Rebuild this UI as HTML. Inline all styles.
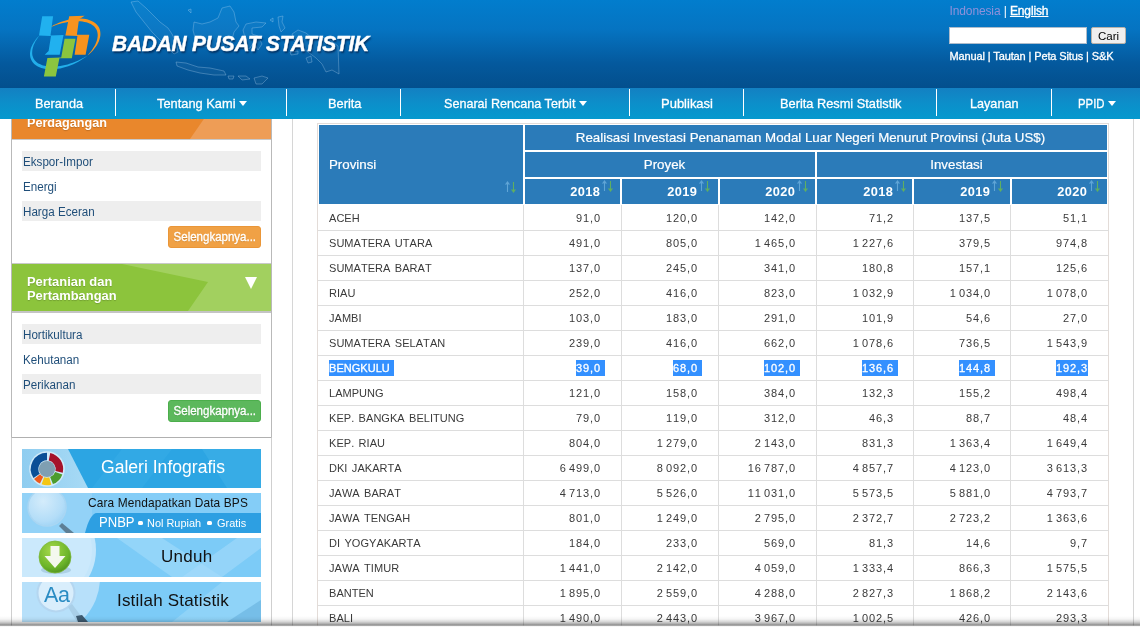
<!DOCTYPE html>
<html lang="id">
<head>
<meta charset="utf-8">
<title>Badan Pusat Statistik</title>
<style>
*{box-sizing:border-box;margin:0;padding:0}
html,body{width:1140px;height:627px;overflow:hidden;background:#fff;font-family:"Liberation Sans",sans-serif}
#page{position:relative;width:1140px;height:627px;overflow:hidden;background:#fff;will-change:transform}
.abs{position:absolute}
/* header */
#hdr,#title,#lang,#sbox,#sbtn,#links,#nav{z-index:5}
#hdr{left:0;top:0;width:1140px;height:88px;background:linear-gradient(to bottom,#027dcd 0%,#0574c2 33%,#04599d 72%,#034f8d 100%)}
#title{left:111.5px;top:31.4px;-webkit-text-stroke:.45px #fff;font:italic bold 22.5px "Liberation Sans",sans-serif;color:#fff;white-space:nowrap;transform-origin:0 0;transform:scaleX(.928);text-shadow:1px 2px 2px rgba(0,30,70,.75);letter-spacing:-.2px}
#lang{left:949.5px;top:4px;font:12px "Liberation Sans",sans-serif;color:#fff;white-space:nowrap;letter-spacing:-.12px}
#lang .id{color:#8f91da}
#lang .en{text-decoration:underline;-webkit-text-stroke:.35px #fff}
#sbox{left:949px;top:27px;width:138px;height:17px;background:#fff;border:1px solid #aebccb}
#sbtn{left:1091px;top:27px;width:35px;height:17px;background:#efefef;border:1px solid #b9b2aa;border-radius:2px;font:11.5px "Liberation Sans",sans-serif;color:#000;text-align:center;line-height:16px}
#links{left:949.5px;top:50px;font:11px "Liberation Sans",sans-serif;color:#fff;white-space:nowrap;letter-spacing:-.12px;-webkit-text-stroke:.3px #fff}
/* nav */
#nav{left:0;top:88px;width:1140px;height:31px;background:linear-gradient(to bottom,#1380c2 0%,#0c8fca 50%,#0599ce 100%)}
.ni{top:0;height:31px;color:#fff;-webkit-text-stroke:.3px #fff;font:13.5px/31px "Liberation Sans",sans-serif;white-space:nowrap;transform-origin:0 50%}
.sep{top:1px;width:1px;height:27px;background:#fff}
.car{display:block;top:13px;width:0;height:0;border-left:4.5px solid transparent;border-right:4.5px solid transparent;border-top:5px solid #fff}

/* sidebar */
.box{border:1px solid #c3c3c3;background:#fff}
.sh{left:12px;width:259px;color:#fff;font:bold 13.5px/14px "Liberation Sans",sans-serif;overflow:hidden;text-shadow:0 1px 1px rgba(0,0,0,.18)}
.it{left:22px;width:239px;height:20px;font:12.5px/22px "Liberation Sans",sans-serif;color:#1f4e79;white-space:nowrap}
.it.g{background:#eeeeee}
.it span{display:inline-block;transform-origin:0 50%;transform:scaleX(.93);margin-left:.8px}
.btn{-webkit-text-stroke:.3px #fff;text-shadow:0 1px 1px rgba(0,0,0,.15);left:168px;width:93px;height:22px;border-radius:3px;color:#fff;font:12.5px/20px "Liberation Sans",sans-serif;text-align:center;white-space:nowrap}
.btn span{display:inline-block;transform:scaleX(.92)}
.bn{left:22px;width:239px;overflow:hidden}
.bn .t{position:absolute;white-space:nowrap;font-family:"Liberation Sans",sans-serif}

/* table */
.hc{background:#2b7bb9;color:#fff;font:13.3px "Liberation Sans",sans-serif;white-space:nowrap;-webkit-text-stroke:.2px #fff}
.hc .c{position:absolute;left:0;right:11px;text-align:center}
.yr{position:absolute;font:bold 12.8px "Liberation Sans",sans-serif;color:#fff;letter-spacing:.4px;margin-left:.4px}
.hl{height:1px;background:#dddddd;left:318px;width:791px}
.vl{width:1px;background:#dddddd;top:205px;height:422px}
.td{font:11px/15px "Liberation Sans",sans-serif;color:#3a3a3a;white-space:pre;letter-spacing:.9px;height:15px;font-kerning:none}
.td.p{left:329px;letter-spacing:.04px;word-spacing:1.3px}
.td.n{text-align:right}
.sel{background:#3390ff;color:#fff;padding:2px 0 1.5px;-webkit-text-stroke:.3px #fff}
.ts{letter-spacing:-.85px}
</style>
</head>
<body>
<div id="page">
  <div id="hdr" class="abs"></div>
  <svg class="abs" style="left:110px;top:0;z-index:5" width="280" height="88" viewBox="110 0 280 88" fill="rgba(255,255,255,.035)" stroke="rgba(190,220,245,.3)" stroke-width="1">
    <path d="M131,2 L138,1 L146,8 L152,14 L160,22 L168,28 L172,34 L176,42 L178,52 L174,54 L168,48 L160,40 L152,32 L144,22 L136,12 Z"/>
    <path d="M176,62 L186,63 L198,67 L210,68 L224,71 L226,75 L214,75 L200,73 L188,70 L177,66 Z"/>
    <path d="M194,22 L202,24 L210,22 L218,18 L222,8 L230,6 L234,12 L236,22 L239,26 L234,32 L232,40 L226,48 L216,50 L208,46 L200,46 L195,38 L193,30 Z"/>
    <path d="M246,24 L256,22 L266,23 L262,27 L252,28 L252,34 L258,36 L262,44 L258,50 L254,42 L250,48 L246,50 L245,38 L243,30 Z"/>
    <path d="M278,17 L283,16 L282,22 L285,28 L281,32 L279,26 Z"/>
    <path d="M292,34 L298,30 L306,33 L312,38 L320,36 L330,40 L338,46 L339,74 L332,70 L326,72 L322,64 L316,58 L308,52 L300,46 L294,40 Z"/>
    <path d="M238,76 L246,76 L250,79 L242,80 Z M254,78 L262,76 L268,78 L262,84 L256,84 Z M228,76 L234,76 L233,79 L229,79 Z"/>
    <path d="M270,20 L273,18 L273,22 Z M188,10 L191,9 L191,13 Z M306,58 L311,56 L312,62 L308,63 Z M290,52 L298,51 L298,54 L291,55 Z" />
  </svg>
  <svg class="abs" style="left:25px;top:10px;z-index:6" width="80" height="72" viewBox="25 10 80 72">
    <path d="M39.3,35.5 L37.6,37.3 L36.1,39.1 L34.7,41.0 L33.4,42.9 L32.4,44.8 L31.5,46.7 L30.8,48.6 L30.4,50.5 L30.1,52.3 L30.0,54.1 L30.1,55.8 L30.4,57.4 L30.9,59.0 L31.6,60.5 L32.5,61.9 L33.5,63.2 L34.8,64.4 L36.2,65.4 L37.8,66.4 L39.5,67.2 L41.4,67.9 L43.4,68.5 L45.6,68.9 L47.8,69.2 L50.2,69.3 L52.6,69.3 L55.1,69.1 L57.7,68.8 L60.3,68.4 L62.9,67.8 L65.5,67.1 L68.2,66.3 L70.8,65.3 L73.4,64.2 L75.9,63.0 L78.4,61.7 L80.8,60.3 L83.1,58.8 L85.4,57.2 L87.5,55.6 L87.5,55.6 L85.1,57.0 L82.7,58.3 L80.3,59.6 L77.8,60.7 L75.3,61.8 L72.8,62.8 L70.2,63.6 L67.7,64.4 L65.1,65.0 L62.6,65.6 L60.2,66.0 L57.8,66.3 L55.4,66.5 L53.1,66.6 L50.9,66.6 L48.8,66.4 L46.8,66.2 L44.8,65.8 L43.0,65.4 L41.3,64.8 L39.8,64.1 L38.3,63.4 L37.0,62.5 L35.9,61.5 L34.9,60.4 L34.0,59.2 L33.3,58.0 L32.8,56.6 L32.4,55.2 L32.2,53.7 L32.2,52.1 L32.3,50.4 L32.6,48.7 L33.1,46.9 L33.7,45.1 L34.6,43.2 L35.5,41.3 L36.7,39.4 L38.0,37.5 L39.3,35.5Z" fill="#22aeea"/>
    <path d="M49.1,27.8 L51.4,26.4 L53.8,25.1 L56.3,23.9 L58.8,22.8 L61.4,21.8 L64.0,21.0 L66.5,20.2 L69.1,19.6 L71.7,19.1 L74.2,18.8 L76.6,18.6 L79.1,18.5 L81.4,18.6 L83.6,18.8 L85.8,19.1 L87.8,19.6 L89.7,20.2 L91.5,20.9 L93.2,21.7 L94.7,22.7 L96.0,23.8 L97.2,25.0 L98.2,26.3 L99.0,27.6 L99.6,29.1 L100.1,30.7 L100.3,32.3 L100.4,34.0 L100.3,35.7 L100.0,37.5 L99.5,39.3 L98.9,41.2 L98.0,43.0 L97.0,44.9 L95.8,46.7 L94.4,48.6 L92.9,50.4 L91.2,52.2 L89.4,53.9 L87.5,55.6 L87.5,55.6 L89.1,53.6 L90.6,51.8 L92.0,49.9 L93.2,48.0 L94.3,46.2 L95.3,44.4 L96.1,42.6 L96.7,40.9 L97.2,39.2 L97.5,37.5 L97.7,36.0 L97.7,34.4 L97.5,33.0 L97.2,31.6 L96.8,30.3 L96.1,29.0 L95.4,27.9 L94.5,26.8 L93.4,25.8 L92.2,24.9 L90.9,24.1 L89.5,23.4 L87.9,22.8 L86.2,22.3 L84.4,21.9 L82.5,21.6 L80.5,21.3 L78.4,21.2 L76.2,21.2 L74.0,21.3 L71.6,21.5 L69.2,21.8 L66.8,22.2 L64.3,22.7 L61.8,23.3 L59.3,24.0 L56.7,24.8 L54.2,25.7 L51.7,26.7 L49.1,27.8Z" fill="#fb961e"/>
    <polygon points="42.2,16.3 53.1,16.3 50.5,35.6 63.5,35 59.7,54.8 44.7,54.8 48.6,51 51,36 39,35.5" fill="#21b1ef"/>
    <polygon points="69.2,16.3 84.7,15.8 79,19.2 76.9,34.7 89.3,34.7 85.6,54.8 74.6,54.8 77.4,36 65.4,35.5" fill="#f7931e"/>
    <polygon points="64.6,38.7 75.5,38.7 71.8,58.2 59.4,58.2 55.8,76.6 43.9,76.6 47.4,58 61.2,57.6" fill="#8bc53f"/>
  </svg>
  <div id="title" class="abs">BADAN PUSAT STATISTIK</div>
  <div id="lang" class="abs"><span class="id">Indonesia</span> | <span class="en">English</span></div>
  <div id="sbox" class="abs"></div>
  <div id="sbtn" class="abs">Cari</div>
  <div id="links" class="abs">Manual | Tautan | Peta Situs | S&amp;K</div>
  <div id="nav" class="abs">
    <div class="ni abs" style="left:35px;transform:scaleX(0.941)">Beranda</div>
    <div class="ni abs" style="left:156.5px;transform:scaleX(0.951)">Tentang Kami</div>
    <i class="car abs" style="left:238.5px"></i>
    <div class="ni abs" style="left:327.5px;transform:scaleX(0.950)">Berita</div>
    <div class="ni abs" style="left:443.6px;transform:scaleX(0.933)">Senarai Rencana Terbit</div>
    <i class="car abs" style="left:578.5px"></i>
    <div class="ni abs" style="left:660.5px;transform:scaleX(0.962)">Publikasi</div>
    <div class="ni abs" style="left:780px;transform:scaleX(0.947)">Berita Resmi Statistik</div>
    <div class="ni abs" style="left:970px;transform:scaleX(0.936)">Layanan</div>
    <div class="ni abs" style="left:1077.5px;transform:scaleX(0.841)">PPID</div>
    <i class="car abs" style="left:1107.5px"></i>
    <div class="sep abs" style="left:115px"></div>
    <div class="sep abs" style="left:286px"></div>
    <div class="sep abs" style="left:400px"></div>
    <div class="sep abs" style="left:629px"></div>
    <div class="sep abs" style="left:743px"></div>
    <div class="sep abs" style="left:936px"></div>
    <div class="sep abs" style="left:1051px"></div>
  </div>
  <!--SIDEBAR-->
  <div class="abs box" style="left:11px;top:100px;width:261px;height:338px;border-color:#b9b9b9"></div>
  <div class="abs sh" style="top:100px;height:39px;background:#e9872c">
    <svg class="abs" style="left:0;top:0" width="259" height="39"><polygon points="178,39 205,0 259,0 259,39" fill="#ee9d56"/></svg>
    <div class="abs" style="left:15px;top:16px;transform-origin:0 0;transform:scaleX(.936)">Perdagangan</div>
  </div>
  <div class="abs" style="left:12px;top:139px;width:259px;height:1px;background:#c9c9c9"></div>
  <div class="abs it g" style="top:151px"><span>Ekspor-Impor</span></div>
  <div class="abs it" style="top:176px"><span>Energi</span></div>
  <div class="abs it g" style="top:201px"><span>Harga Eceran</span></div>
  <div class="abs btn" style="top:226px;background:#f0a145;border:1px solid #ea9638"><span>Selengkapnya...</span></div>
  <div class="abs" style="left:12px;top:263px;width:259px;height:1px;background:#c9c9c9"></div>
  <div class="abs sh" style="top:264px;height:47px;background:#8cc43c">
    <svg class="abs" style="left:0;top:0" width="259" height="47"><polygon points="110,0 196,18 176,47 259,47 259,0" fill="#a2d05f"/><polygon points="233,13 245,13 239,25" fill="#fff"/></svg>
    <div class="abs" style="left:15px;top:11px;transform-origin:0 0;transform:scaleX(.955)">Pertanian dan<br>Pertambangan</div>
  </div>
  <div class="abs" style="left:12px;top:311px;width:259px;height:2px;background:#c4c4c4"></div>
  <div class="abs it g" style="top:324px"><span>Hortikultura</span></div>
  <div class="abs it" style="top:349px"><span>Kehutanan</span></div>
  <div class="abs it g" style="top:374px"><span>Perikanan</span></div>
  <div class="abs btn" style="top:400px;background:#5cb85c;border:1px solid #4cae4c"><span>Selengkapnya...</span></div>
  <div class="abs box" style="left:11px;top:437px;width:261px;height:200px;border-color:#cfcfcf;border-top-color:#b0b0b0"></div>
  
  <div class="abs bn" style="top:449px;height:39px;background:#2ca5e3">
    <svg class="abs" style="left:0;top:0" width="239" height="39">
      <defs><linearGradient id="g1" x1="0" y1="0" x2="1" y2="0"><stop offset="0" stop-color="#8fcdf0"/><stop offset="1" stop-color="#a8daf5"/></linearGradient></defs>
      <polygon points="0,0 46,0 66,39 0,39" fill="url(#g1)"/>
      <polygon points="100,0 150,0 120,39 70,39" fill="#37abe6" opacity=".6"/>
      <polygon points="180,0 239,0 239,39 205,39" fill="#3fb0e8" opacity=".6"/>
      <g transform="translate(25,20) scale(1.08)">
        <circle r="16.5" fill="#dff0fa" opacity=".8"/>
        <path d="M0,-15 A15,15 0 0 0 -12.5,8.3 L-6.7,4.4 A8,8 0 0 1 0,-8 Z" fill="#0b4f96"/>
        <path d="M3,-14.7 A15,15 0 0 1 14.6,3.5 L7.8,1.9 A8,8 0 0 0 1.6,-7.8 Z" fill="#a5122a"/>
        <path d="M14.2,5 A15,15 0 0 1 5.5,14 L2.9,7.5 A8,8 0 0 0 7.6,2.7 Z" fill="#4c9c2e"/>
        <path d="M4,14.5 A15,15 0 0 1 -5,14.2 L-2.7,7.6 A8,8 0 0 0 2.1,7.7 Z" fill="#f4c614"/>
        <path d="M-6.5,13.5 A15,15 0 0 1 -12,9.2 L-6.4,4.9 A8,8 0 0 0 -3.5,7.2 Z" fill="#ee5a1c"/>
        <circle r="7.5" fill="#7f9fb2"/>
      </g>
    </svg>
    <div class="t" style="left:79px;top:8px;font-size:18px;color:#fff;transform-origin:0 0;transform:scaleX(.976)">Galeri Infografis</div>
  </div>
  <div class="abs bn" style="top:493px;height:40px;background:#84cdf7">
    <svg class="abs" style="left:0;top:0" width="239" height="40">
      <defs><radialGradient id="g2" cx=".4" cy=".35" r=".7"><stop offset="0" stop-color="#d4ecfb"/><stop offset=".75" stop-color="#b3ddf8"/><stop offset="1" stop-color="#9ed3f5"/></radialGradient></defs>
      <rect x="0" y="0" width="70" height="40" fill="#93d2f7"/>
      <path d="M75,20 H239 V40 H63 C66,28 70,20 75,20 Z" fill="#2d9fe2"/>
      <circle cx="25" cy="14" r="19" fill="url(#g2)" stroke="#a9d6f3" stroke-width="1.5"/>
      <path d="M40,30 L52,40 L44,40 L37,33 Z" fill="#5d7f96"/>
    </svg>
    <div class="t" style="left:66px;top:2px;font-size:13px;color:#111;letter-spacing:.15px;transform-origin:0 0;transform:scaleX(.914)">Cara Mendapatkan Data BPS</div>
    <div class="t" style="left:77px;top:21px;font-size:14.5px;color:#fff;transform-origin:0 0;transform:scaleX(.9)">PNBP</div>
    <div class="abs" style="left:116px;top:28px;width:5px;height:4px;background:#fff;border-radius:1.5px"></div>
    <div class="t" style="left:125px;top:24px;font-size:11.5px;color:#fff;transform-origin:0 0;transform:scaleX(.95)">Nol Rupiah</div>
    <div class="abs" style="left:185px;top:28px;width:5px;height:4px;background:#fff;border-radius:1.5px"></div>
    <div class="t" style="left:195px;top:24px;font-size:11.5px;color:#fff;transform-origin:0 0;transform:scaleX(.95)">Gratis</div>
  </div>
  <div class="abs bn" style="top:538px;height:39px;background:#7ccbf7">
    <svg class="abs" style="left:0;top:0" width="239" height="39">
      <defs><radialGradient id="g3" cx=".4" cy=".3" r=".75"><stop offset="0" stop-color="#a6d84a"/><stop offset=".7" stop-color="#6cb52a"/><stop offset="1" stop-color="#4d8f1f"/></radialGradient></defs>
      <circle cx="20" cy="12" r="54" fill="#c4e6fb"/>
      <circle cx="20" cy="12" r="50" fill="#cbe9fc"/>
      <path d="M95,0 L140,0 L200,39 L150,39 Z" fill="#9dd8f9" opacity=".7"/>
      <path d="M160,39 L215,0 L239,0 L239,10 L200,39 Z" fill="#a5dbfa" opacity=".6"/>
      <ellipse cx="34" cy="32" rx="15" ry="4" fill="#8fb8d0" opacity=".5"/>
      <circle cx="33" cy="19" r="16" fill="url(#g3)" stroke="#7db83a" stroke-width=".8"/>
      <path d="M28.5,8 H37.5 V18 H43.5 L33,30 L22.5,18 H28.5 Z" fill="#f4f8ee"/>
    </svg>
    <div class="t" style="left:139px;top:9px;font-size:17px;color:#111;letter-spacing:.3px">Unduh</div>
  </div>
  <div class="abs bn" style="top:582px;height:40px;background:#7ccbf7">
    <svg class="abs" style="left:0;top:0" width="239" height="40">
      <circle cx="20" cy="-4" r="58" fill="#b7e0fa"/>
      <path d="M150,40 L200,0 L239,0 L239,40 Z" fill="#9dd8f9" opacity=".6"/>
      <path d="M205,40 L239,18 L239,40 Z" fill="#5da9d8" opacity=".5"/>
      <circle cx="34" cy="11" r="18.5" fill="#d9eefc" stroke="#b4d6f0" stroke-width="2"/>
      <path d="M46,25 L50,22 L62,38 L55,40 Z" fill="#a9cfe8"/>
      <path d="M54,34 L60,33 L66,40 L56,40 Z" fill="#3d5a70"/>
    </svg>
    <div class="t" style="left:22px;top:1px;font-size:21.5px;color:#2a8cc3;letter-spacing:-.3px">Aa</div>
    <div class="t" style="left:95px;top:9px;font-size:17px;color:#111;letter-spacing:.2px">Istilah Statistik</div>
  </div>


  <div class="abs" style="left:292px;top:119px;width:1px;height:508px;background:#d6d6d6"></div>
  <div class="abs" style="left:1133px;top:119px;width:1px;height:508px;background:#d6d6d6"></div>
  <div class="abs" style="left:317px;top:123px;width:792px;height:510px;border:1px solid #e3dcd8"></div>
  <div class="abs hc" style="left:319px;top:125px;width:204px;height:79px"><div class="abs" style="left:10px;top:32px">Provinsi</div></div>
  <div class="abs hc" style="left:525px;top:125px;width:582px;height:25px"><div class="c" style="top:5px">Realisasi Investasi Penanaman Modal Luar Negeri Menurut Provinsi (Juta US$)</div></div>
  <div class="abs hc" style="left:525px;top:152px;width:290px;height:25px"><div class="c" style="top:5px">Proyek</div></div>
  <div class="abs hc" style="left:817px;top:152px;width:290px;height:25px"><div class="c" style="top:5px">Investasi</div></div>
  <svg class="abs" style="left:505px;top:181px" width="12" height="12" viewBox="0 0 12 12"><path d="M2.5 11V1.2M0.6 3.6L2.5 1l1.9 2.6" fill="none" stroke="#60a5d6" stroke-width="1.1"/><path d="M8.5 1v9.8M6.6 8.4L8.5 11l1.9-2.6" fill="none" stroke="#5fae62" stroke-width="1.1"/></svg>
  <div class="abs hc" style="left:525px;top:179px;width:95px;height:25px"></div>
  <div class="abs yr" style="left:540px;width:60px;text-align:right;top:184px">2018</div>
  <svg class="abs" style="left:602px;top:180px" width="12" height="12" viewBox="0 0 12 12"><path d="M2.5 11V1.2M0.6 3.6L2.5 1l1.9 2.6" fill="none" stroke="#60a5d6" stroke-width="1.1"/><path d="M8.5 1v9.8M6.6 8.4L8.5 11l1.9-2.6" fill="none" stroke="#5fae62" stroke-width="1.1"/></svg>
  <div class="abs hc" style="left:622px;top:179px;width:96px;height:25px"></div>
  <div class="abs yr" style="left:637px;width:60px;text-align:right;top:184px">2019</div>
  <svg class="abs" style="left:699px;top:180px" width="12" height="12" viewBox="0 0 12 12"><path d="M2.5 11V1.2M0.6 3.6L2.5 1l1.9 2.6" fill="none" stroke="#60a5d6" stroke-width="1.1"/><path d="M8.5 1v9.8M6.6 8.4L8.5 11l1.9-2.6" fill="none" stroke="#5fae62" stroke-width="1.1"/></svg>
  <div class="abs hc" style="left:720px;top:179px;width:95px;height:25px"></div>
  <div class="abs yr" style="left:735px;width:60px;text-align:right;top:184px">2020</div>
  <svg class="abs" style="left:797px;top:180px" width="12" height="12" viewBox="0 0 12 12"><path d="M2.5 11V1.2M0.6 3.6L2.5 1l1.9 2.6" fill="none" stroke="#60a5d6" stroke-width="1.1"/><path d="M8.5 1v9.8M6.6 8.4L8.5 11l1.9-2.6" fill="none" stroke="#5fae62" stroke-width="1.1"/></svg>
  <div class="abs hc" style="left:817px;top:179px;width:95px;height:25px"></div>
  <div class="abs yr" style="left:833px;width:60px;text-align:right;top:184px">2018</div>
  <svg class="abs" style="left:895px;top:180px" width="12" height="12" viewBox="0 0 12 12"><path d="M2.5 11V1.2M0.6 3.6L2.5 1l1.9 2.6" fill="none" stroke="#60a5d6" stroke-width="1.1"/><path d="M8.5 1v9.8M6.6 8.4L8.5 11l1.9-2.6" fill="none" stroke="#5fae62" stroke-width="1.1"/></svg>
  <div class="abs hc" style="left:914px;top:179px;width:96px;height:25px"></div>
  <div class="abs yr" style="left:930px;width:60px;text-align:right;top:184px">2019</div>
  <svg class="abs" style="left:992px;top:180px" width="12" height="12" viewBox="0 0 12 12"><path d="M2.5 11V1.2M0.6 3.6L2.5 1l1.9 2.6" fill="none" stroke="#60a5d6" stroke-width="1.1"/><path d="M8.5 1v9.8M6.6 8.4L8.5 11l1.9-2.6" fill="none" stroke="#5fae62" stroke-width="1.1"/></svg>
  <div class="abs hc" style="left:1012px;top:179px;width:95px;height:25px"></div>
  <div class="abs yr" style="left:1027px;width:60px;text-align:right;top:184px">2020</div>
  <svg class="abs" style="left:1089px;top:180px" width="12" height="12" viewBox="0 0 12 12"><path d="M2.5 11V1.2M0.6 3.6L2.5 1l1.9 2.6" fill="none" stroke="#60a5d6" stroke-width="1.1"/><path d="M8.5 1v9.8M6.6 8.4L8.5 11l1.9-2.6" fill="none" stroke="#5fae62" stroke-width="1.1"/></svg>
  <div class="abs hl" style="top:230px"></div>
  <div class="abs hl" style="top:255px"></div>
  <div class="abs hl" style="top:280px"></div>
  <div class="abs hl" style="top:305px"></div>
  <div class="abs hl" style="top:330px"></div>
  <div class="abs hl" style="top:355px"></div>
  <div class="abs hl" style="top:380px"></div>
  <div class="abs hl" style="top:405px"></div>
  <div class="abs hl" style="top:430px"></div>
  <div class="abs hl" style="top:455px"></div>
  <div class="abs hl" style="top:480px"></div>
  <div class="abs hl" style="top:505px"></div>
  <div class="abs hl" style="top:530px"></div>
  <div class="abs hl" style="top:555px"></div>
  <div class="abs hl" style="top:580px"></div>
  <div class="abs hl" style="top:605px"></div>
  <div class="abs vl" style="left:523px"></div>
  <div class="abs vl" style="left:621px"></div>
  <div class="abs vl" style="left:718px"></div>
  <div class="abs vl" style="left:816px"></div>
  <div class="abs vl" style="left:913px"></div>
  <div class="abs vl" style="left:1010px"></div>
  <div class="abs td p" style="top:211px">ACEH</div>
  <div class="abs td n" style="left:520px;width:81px;top:211px">91,0</div>
  <div class="abs td n" style="left:617px;width:81px;top:211px">120,0</div>
  <div class="abs td n" style="left:715px;width:81px;top:211px">142,0</div>
  <div class="abs td n" style="left:813px;width:81px;top:211px">71,2</div>
  <div class="abs td n" style="left:910px;width:81px;top:211px">137,5</div>
  <div class="abs td n" style="left:1007px;width:81px;top:211px">51,1</div>
  <div class="abs td p" style="top:236px">SUMATERA UTARA</div>
  <div class="abs td n" style="left:520px;width:81px;top:236px">491,0</div>
  <div class="abs td n" style="left:617px;width:81px;top:236px">805,0</div>
  <div class="abs td n" style="left:715px;width:81px;top:236px">1<span class="ts"> </span>465,0</div>
  <div class="abs td n" style="left:813px;width:81px;top:236px">1<span class="ts"> </span>227,6</div>
  <div class="abs td n" style="left:910px;width:81px;top:236px">379,5</div>
  <div class="abs td n" style="left:1007px;width:81px;top:236px">974,8</div>
  <div class="abs td p" style="top:261px">SUMATERA BARAT</div>
  <div class="abs td n" style="left:520px;width:81px;top:261px">137,0</div>
  <div class="abs td n" style="left:617px;width:81px;top:261px">245,0</div>
  <div class="abs td n" style="left:715px;width:81px;top:261px">341,0</div>
  <div class="abs td n" style="left:813px;width:81px;top:261px">180,8</div>
  <div class="abs td n" style="left:910px;width:81px;top:261px">157,1</div>
  <div class="abs td n" style="left:1007px;width:81px;top:261px">125,6</div>
  <div class="abs td p" style="top:286px">RIAU</div>
  <div class="abs td n" style="left:520px;width:81px;top:286px">252,0</div>
  <div class="abs td n" style="left:617px;width:81px;top:286px">416,0</div>
  <div class="abs td n" style="left:715px;width:81px;top:286px">823,0</div>
  <div class="abs td n" style="left:813px;width:81px;top:286px">1<span class="ts"> </span>032,9</div>
  <div class="abs td n" style="left:910px;width:81px;top:286px">1<span class="ts"> </span>034,0</div>
  <div class="abs td n" style="left:1007px;width:81px;top:286px">1<span class="ts"> </span>078,0</div>
  <div class="abs td p" style="top:311px">JAMBI</div>
  <div class="abs td n" style="left:520px;width:81px;top:311px">103,0</div>
  <div class="abs td n" style="left:617px;width:81px;top:311px">183,0</div>
  <div class="abs td n" style="left:715px;width:81px;top:311px">291,0</div>
  <div class="abs td n" style="left:813px;width:81px;top:311px">101,9</div>
  <div class="abs td n" style="left:910px;width:81px;top:311px">54,6</div>
  <div class="abs td n" style="left:1007px;width:81px;top:311px">27,0</div>
  <div class="abs td p" style="top:336px">SUMATERA SELATAN</div>
  <div class="abs td n" style="left:520px;width:81px;top:336px">239,0</div>
  <div class="abs td n" style="left:617px;width:81px;top:336px">416,0</div>
  <div class="abs td n" style="left:715px;width:81px;top:336px">662,0</div>
  <div class="abs td n" style="left:813px;width:81px;top:336px">1<span class="ts"> </span>078,6</div>
  <div class="abs td n" style="left:910px;width:81px;top:336px">736,5</div>
  <div class="abs td n" style="left:1007px;width:81px;top:336px">1<span class="ts"> </span>543,9</div>
  <div class="abs td p" style="top:361px"><span class="sel">BENGKULU </span></div>
  <div class="abs td n" style="left:520px;width:85px;top:361px"><span class="sel">39,0 </span></div>
  <div class="abs td n" style="left:617px;width:85px;top:361px"><span class="sel">68,0 </span></div>
  <div class="abs td n" style="left:715px;width:85px;top:361px"><span class="sel">102,0 </span></div>
  <div class="abs td n" style="left:813px;width:85px;top:361px"><span class="sel">136,6 </span></div>
  <div class="abs td n" style="left:910px;width:85px;top:361px"><span class="sel">144,8 </span></div>
  <div class="abs td n" style="left:1007px;width:81px;top:361px"><span class="sel">192,3</span></div>
  <div class="abs td p" style="top:386px">LAMPUNG</div>
  <div class="abs td n" style="left:520px;width:81px;top:386px">121,0</div>
  <div class="abs td n" style="left:617px;width:81px;top:386px">158,0</div>
  <div class="abs td n" style="left:715px;width:81px;top:386px">384,0</div>
  <div class="abs td n" style="left:813px;width:81px;top:386px">132,3</div>
  <div class="abs td n" style="left:910px;width:81px;top:386px">155,2</div>
  <div class="abs td n" style="left:1007px;width:81px;top:386px">498,4</div>
  <div class="abs td p" style="top:411px">KEP. BANGKA BELITUNG</div>
  <div class="abs td n" style="left:520px;width:81px;top:411px">79,0</div>
  <div class="abs td n" style="left:617px;width:81px;top:411px">119,0</div>
  <div class="abs td n" style="left:715px;width:81px;top:411px">312,0</div>
  <div class="abs td n" style="left:813px;width:81px;top:411px">46,3</div>
  <div class="abs td n" style="left:910px;width:81px;top:411px">88,7</div>
  <div class="abs td n" style="left:1007px;width:81px;top:411px">48,4</div>
  <div class="abs td p" style="top:436px">KEP. RIAU</div>
  <div class="abs td n" style="left:520px;width:81px;top:436px">804,0</div>
  <div class="abs td n" style="left:617px;width:81px;top:436px">1<span class="ts"> </span>279,0</div>
  <div class="abs td n" style="left:715px;width:81px;top:436px">2<span class="ts"> </span>143,0</div>
  <div class="abs td n" style="left:813px;width:81px;top:436px">831,3</div>
  <div class="abs td n" style="left:910px;width:81px;top:436px">1<span class="ts"> </span>363,4</div>
  <div class="abs td n" style="left:1007px;width:81px;top:436px">1<span class="ts"> </span>649,4</div>
  <div class="abs td p" style="top:461px">DKI JAKARTA</div>
  <div class="abs td n" style="left:520px;width:81px;top:461px">6<span class="ts"> </span>499,0</div>
  <div class="abs td n" style="left:617px;width:81px;top:461px">8<span class="ts"> </span>092,0</div>
  <div class="abs td n" style="left:715px;width:81px;top:461px">16<span class="ts"> </span>787,0</div>
  <div class="abs td n" style="left:813px;width:81px;top:461px">4<span class="ts"> </span>857,7</div>
  <div class="abs td n" style="left:910px;width:81px;top:461px">4<span class="ts"> </span>123,0</div>
  <div class="abs td n" style="left:1007px;width:81px;top:461px">3<span class="ts"> </span>613,3</div>
  <div class="abs td p" style="top:486px">JAWA BARAT</div>
  <div class="abs td n" style="left:520px;width:81px;top:486px">4<span class="ts"> </span>713,0</div>
  <div class="abs td n" style="left:617px;width:81px;top:486px">5<span class="ts"> </span>526,0</div>
  <div class="abs td n" style="left:715px;width:81px;top:486px">11<span class="ts"> </span>031,0</div>
  <div class="abs td n" style="left:813px;width:81px;top:486px">5<span class="ts"> </span>573,5</div>
  <div class="abs td n" style="left:910px;width:81px;top:486px">5<span class="ts"> </span>881,0</div>
  <div class="abs td n" style="left:1007px;width:81px;top:486px">4<span class="ts"> </span>793,7</div>
  <div class="abs td p" style="top:511px">JAWA TENGAH</div>
  <div class="abs td n" style="left:520px;width:81px;top:511px">801,0</div>
  <div class="abs td n" style="left:617px;width:81px;top:511px">1<span class="ts"> </span>249,0</div>
  <div class="abs td n" style="left:715px;width:81px;top:511px">2<span class="ts"> </span>795,0</div>
  <div class="abs td n" style="left:813px;width:81px;top:511px">2<span class="ts"> </span>372,7</div>
  <div class="abs td n" style="left:910px;width:81px;top:511px">2<span class="ts"> </span>723,2</div>
  <div class="abs td n" style="left:1007px;width:81px;top:511px">1<span class="ts"> </span>363,6</div>
  <div class="abs td p" style="top:536px">DI YOGYAKARTA</div>
  <div class="abs td n" style="left:520px;width:81px;top:536px">184,0</div>
  <div class="abs td n" style="left:617px;width:81px;top:536px">233,0</div>
  <div class="abs td n" style="left:715px;width:81px;top:536px">569,0</div>
  <div class="abs td n" style="left:813px;width:81px;top:536px">81,3</div>
  <div class="abs td n" style="left:910px;width:81px;top:536px">14,6</div>
  <div class="abs td n" style="left:1007px;width:81px;top:536px">9,7</div>
  <div class="abs td p" style="top:561px">JAWA TIMUR</div>
  <div class="abs td n" style="left:520px;width:81px;top:561px">1<span class="ts"> </span>441,0</div>
  <div class="abs td n" style="left:617px;width:81px;top:561px">2<span class="ts"> </span>142,0</div>
  <div class="abs td n" style="left:715px;width:81px;top:561px">4<span class="ts"> </span>059,0</div>
  <div class="abs td n" style="left:813px;width:81px;top:561px">1<span class="ts"> </span>333,4</div>
  <div class="abs td n" style="left:910px;width:81px;top:561px">866,3</div>
  <div class="abs td n" style="left:1007px;width:81px;top:561px">1<span class="ts"> </span>575,5</div>
  <div class="abs td p" style="top:586px">BANTEN</div>
  <div class="abs td n" style="left:520px;width:81px;top:586px">1<span class="ts"> </span>895,0</div>
  <div class="abs td n" style="left:617px;width:81px;top:586px">2<span class="ts"> </span>559,0</div>
  <div class="abs td n" style="left:715px;width:81px;top:586px">4<span class="ts"> </span>288,0</div>
  <div class="abs td n" style="left:813px;width:81px;top:586px">2<span class="ts"> </span>827,3</div>
  <div class="abs td n" style="left:910px;width:81px;top:586px">1<span class="ts"> </span>868,2</div>
  <div class="abs td n" style="left:1007px;width:81px;top:586px">2<span class="ts"> </span>143,6</div>
  <div class="abs td p" style="top:611px">BALI</div>
  <div class="abs td n" style="left:520px;width:81px;top:611px">1<span class="ts"> </span>490,0</div>
  <div class="abs td n" style="left:617px;width:81px;top:611px">2<span class="ts"> </span>443,0</div>
  <div class="abs td n" style="left:715px;width:81px;top:611px">3<span class="ts"> </span>967,0</div>
  <div class="abs td n" style="left:813px;width:81px;top:611px">1<span class="ts"> </span>002,5</div>
  <div class="abs td n" style="left:910px;width:81px;top:611px">426,0</div>
  <div class="abs td n" style="left:1007px;width:81px;top:611px">293,3</div>
  <div class="abs" style="left:0;top:616px;width:1140px;height:11px;z-index:9;background:linear-gradient(to bottom,rgba(0,0,0,0) 0%,rgba(0,0,0,.04) 28%,rgba(0,0,0,.16) 52%,rgba(0,0,0,.33) 72%,rgba(0,0,0,.5) 86%,#f0f0f0 87%,#fafafa 100%)"></div>
</div>
</body>
</html>
